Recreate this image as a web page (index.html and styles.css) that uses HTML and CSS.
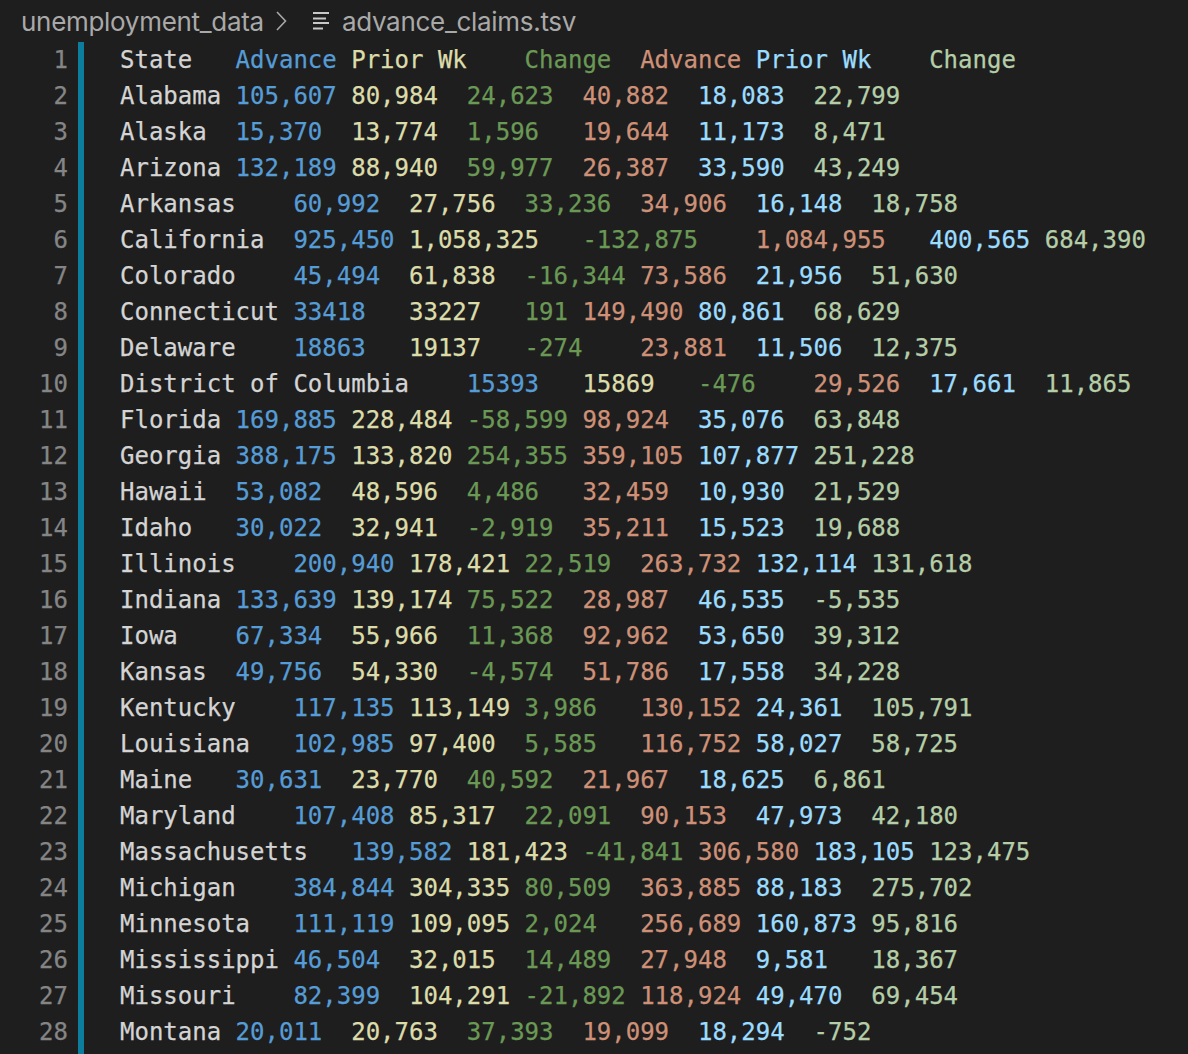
FILE: index.html
```html
<!DOCTYPE html>
<html lang="en">
<head>
<meta charset="utf-8">
<title>advance_claims.tsv</title>
<link rel="stylesheet" href="styles.css">
</head>
<body>
<div class="breadcrumbs">
  <span class="crumb">unemployment_data</span>
  <svg class="chev" width="12" height="20" viewBox="0 0 12 20"><polyline points="2,1 10.5,10 2,19" fill="none" stroke="#a8a8a8" stroke-width="1.6"/></svg>
  <svg class="file-icon" width="18" height="20" viewBox="0 0 18 20"><g stroke="#c8c8c8" stroke-width="2"><line x1="1" y1="2" x2="17" y2="2"/><line x1="1" y1="7.5" x2="14" y2="7.5"/><line x1="1" y1="12" x2="17" y2="12"/><line x1="1" y1="17.5" x2="11" y2="17.5"/></g></svg>
  <span class="crumb">advance_claims.tsv</span>
</div>
<div class="editor">
<div class="gutter"><div>1</div><div>2</div><div>3</div><div>4</div><div>5</div><div>6</div><div>7</div><div>8</div><div>9</div><div>10</div><div>11</div><div>12</div><div>13</div><div>14</div><div>15</div><div>16</div><div>17</div><div>18</div><div>19</div><div>20</div><div>21</div><div>22</div><div>23</div><div>24</div><div>25</div><div>26</div><div>27</div><div>28</div></div>
<div class="code">
<div class="line"><span class="c1">State</span>	<span class="c2">Advance</span>	<span class="c3">Prior Wk</span>	<span class="c4">Change</span>	<span class="c5">Advance</span>	<span class="c6">Prior Wk</span>	<span class="c7">Change</span></div>
<div class="line"><span class="c1">Alabama</span>	<span class="c2">105,607</span>	<span class="c3">80,984</span>	<span class="c4">24,623</span>	<span class="c5">40,882</span>	<span class="c6">18,083</span>	<span class="c7">22,799</span></div>
<div class="line"><span class="c1">Alaska</span>	<span class="c2">15,370</span>	<span class="c3">13,774</span>	<span class="c4">1,596</span>	<span class="c5">19,644</span>	<span class="c6">11,173</span>	<span class="c7">8,471</span></div>
<div class="line"><span class="c1">Arizona</span>	<span class="c2">132,189</span>	<span class="c3">88,940</span>	<span class="c4">59,977</span>	<span class="c5">26,387</span>	<span class="c6">33,590</span>	<span class="c7">43,249</span></div>
<div class="line"><span class="c1">Arkansas</span>	<span class="c2">60,992</span>	<span class="c3">27,756</span>	<span class="c4">33,236</span>	<span class="c5">34,906</span>	<span class="c6">16,148</span>	<span class="c7">18,758</span></div>
<div class="line"><span class="c1">California</span>	<span class="c2">925,450</span>	<span class="c3">1,058,325</span>	<span class="c4">-132,875</span>	<span class="c5">1,084,955</span>	<span class="c6">400,565</span>	<span class="c7">684,390</span></div>
<div class="line"><span class="c1">Colorado</span>	<span class="c2">45,494</span>	<span class="c3">61,838</span>	<span class="c4">-16,344</span>	<span class="c5">73,586</span>	<span class="c6">21,956</span>	<span class="c7">51,630</span></div>
<div class="line"><span class="c1">Connecticut</span>	<span class="c2">33418</span>	<span class="c3">33227</span>	<span class="c4">191</span>	<span class="c5">149,490</span>	<span class="c6">80,861</span>	<span class="c7">68,629</span></div>
<div class="line"><span class="c1">Delaware</span>	<span class="c2">18863</span>	<span class="c3">19137</span>	<span class="c4">-274</span>	<span class="c5">23,881</span>	<span class="c6">11,506</span>	<span class="c7">12,375</span></div>
<div class="line"><span class="c1">District of Columbia</span>	<span class="c2">15393</span>	<span class="c3">15869</span>	<span class="c4">-476</span>	<span class="c5">29,526</span>	<span class="c6">17,661</span>	<span class="c7">11,865</span></div>
<div class="line"><span class="c1">Florida</span>	<span class="c2">169,885</span>	<span class="c3">228,484</span>	<span class="c4">-58,599</span>	<span class="c5">98,924</span>	<span class="c6">35,076</span>	<span class="c7">63,848</span></div>
<div class="line"><span class="c1">Georgia</span>	<span class="c2">388,175</span>	<span class="c3">133,820</span>	<span class="c4">254,355</span>	<span class="c5">359,105</span>	<span class="c6">107,877</span>	<span class="c7">251,228</span></div>
<div class="line"><span class="c1">Hawaii</span>	<span class="c2">53,082</span>	<span class="c3">48,596</span>	<span class="c4">4,486</span>	<span class="c5">32,459</span>	<span class="c6">10,930</span>	<span class="c7">21,529</span></div>
<div class="line"><span class="c1">Idaho</span>	<span class="c2">30,022</span>	<span class="c3">32,941</span>	<span class="c4">-2,919</span>	<span class="c5">35,211</span>	<span class="c6">15,523</span>	<span class="c7">19,688</span></div>
<div class="line"><span class="c1">Illinois</span>	<span class="c2">200,940</span>	<span class="c3">178,421</span>	<span class="c4">22,519</span>	<span class="c5">263,732</span>	<span class="c6">132,114</span>	<span class="c7">131,618</span></div>
<div class="line"><span class="c1">Indiana</span>	<span class="c2">133,639</span>	<span class="c3">139,174</span>	<span class="c4">75,522</span>	<span class="c5">28,987</span>	<span class="c6">46,535</span>	<span class="c7">-5,535</span></div>
<div class="line"><span class="c1">Iowa</span>	<span class="c2">67,334</span>	<span class="c3">55,966</span>	<span class="c4">11,368</span>	<span class="c5">92,962</span>	<span class="c6">53,650</span>	<span class="c7">39,312</span></div>
<div class="line"><span class="c1">Kansas</span>	<span class="c2">49,756</span>	<span class="c3">54,330</span>	<span class="c4">-4,574</span>	<span class="c5">51,786</span>	<span class="c6">17,558</span>	<span class="c7">34,228</span></div>
<div class="line"><span class="c1">Kentucky</span>	<span class="c2">117,135</span>	<span class="c3">113,149</span>	<span class="c4">3,986</span>	<span class="c5">130,152</span>	<span class="c6">24,361</span>	<span class="c7">105,791</span></div>
<div class="line"><span class="c1">Louisiana</span>	<span class="c2">102,985</span>	<span class="c3">97,400</span>	<span class="c4">5,585</span>	<span class="c5">116,752</span>	<span class="c6">58,027</span>	<span class="c7">58,725</span></div>
<div class="line"><span class="c1">Maine</span>	<span class="c2">30,631</span>	<span class="c3">23,770</span>	<span class="c4">40,592</span>	<span class="c5">21,967</span>	<span class="c6">18,625</span>	<span class="c7">6,861</span></div>
<div class="line"><span class="c1">Maryland</span>	<span class="c2">107,408</span>	<span class="c3">85,317</span>	<span class="c4">22,091</span>	<span class="c5">90,153</span>	<span class="c6">47,973</span>	<span class="c7">42,180</span></div>
<div class="line"><span class="c1">Massachusetts</span>	<span class="c2">139,582</span>	<span class="c3">181,423</span>	<span class="c4">-41,841</span>	<span class="c5">306,580</span>	<span class="c6">183,105</span>	<span class="c7">123,475</span></div>
<div class="line"><span class="c1">Michigan</span>	<span class="c2">384,844</span>	<span class="c3">304,335</span>	<span class="c4">80,509</span>	<span class="c5">363,885</span>	<span class="c6">88,183</span>	<span class="c7">275,702</span></div>
<div class="line"><span class="c1">Minnesota</span>	<span class="c2">111,119</span>	<span class="c3">109,095</span>	<span class="c4">2,024</span>	<span class="c5">256,689</span>	<span class="c6">160,873</span>	<span class="c7">95,816</span></div>
<div class="line"><span class="c1">Mississippi</span>	<span class="c2">46,504</span>	<span class="c3">32,015</span>	<span class="c4">14,489</span>	<span class="c5">27,948</span>	<span class="c6">9,581</span>	<span class="c7">18,367</span></div>
<div class="line"><span class="c1">Missouri</span>	<span class="c2">82,399</span>	<span class="c3">104,291</span>	<span class="c4">-21,892</span>	<span class="c5">118,924</span>	<span class="c6">49,470</span>	<span class="c7">69,454</span></div>
<div class="line"><span class="c1">Montana</span>	<span class="c2">20,011</span>	<span class="c3">20,763</span>	<span class="c4">37,393</span>	<span class="c5">19,099</span>	<span class="c6">18,294</span>	<span class="c7">-752</span></div>
</div>
</div>
</body>
</html>
```
FILE: styles.css
```css
html, body {
  margin: 0;
  padding: 0;
  background: #1e1e1e;
}
body {
  height: 100vh;
  display: flex;
  flex-direction: column;
  overflow: hidden;
}
.breadcrumbs {
  height: 42px;
  flex: none;
  display: flex;
  align-items: center;
  padding-left: 21px;
  font-family: Inter, "Liberation Sans", sans-serif;
  font-size: 26px;
  color: #a9a9a9;
  letter-spacing: -0.3px;
}
.chev {
  margin-left: 11px;
  margin-right: 25px;
}
.file-icon {
  margin-right: 12px;
}
.editor {
  flex: 1;
  display: flex;
  font-family: "DejaVu Sans Mono", monospace;
  font-size: 24px;
  line-height: 36px;
  -webkit-text-stroke: 0.25px currentColor;
}
.gutter {
  width: 68px;
  padding-right: 10px;
  text-align: right;
  color: #858585;
}
.code {
  flex: 1;
  border-left: 6px solid #0c7d9d;
  padding-left: 36px;
  color: #d4d4d4;
}
.line {
  height: 36px;
  white-space: pre;
  tab-size: 4;
  -moz-tab-size: 4;
}
.c1 { color: #d4d4d4; }
.c2 { color: #569cd6; }
.c3 { color: #dcdcaa; }
.c4 { color: #6a9955; }
.c5 { color: #ce9178; }
.c6 { color: #9cdcfe; }
.c7 { color: #b5cea8; }
```
